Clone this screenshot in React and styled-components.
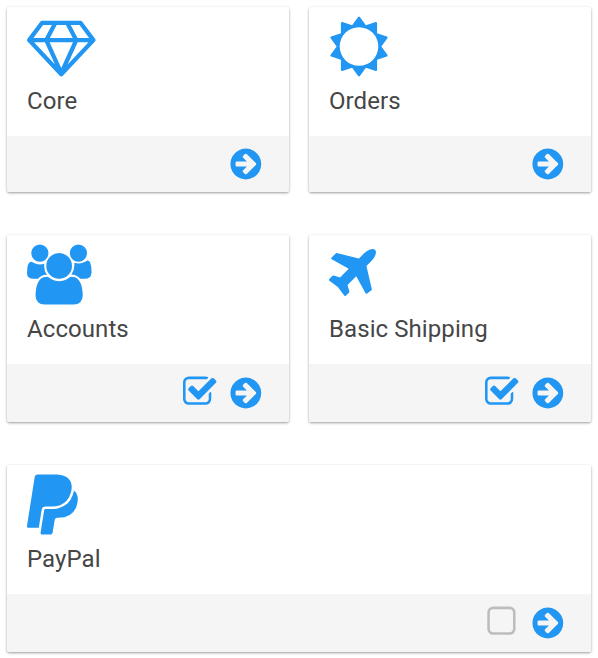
import React from 'react';
import styled, { createGlobalStyle } from 'styled-components';

const GlobalStyle = createGlobalStyle`
  body {
    margin: 0;
    background: #fff;
    font-family: Roboto, "Liberation Sans", sans-serif;
    color: #464646;
  }
`;

const Board = styled.main`
  display: grid;
  grid-template-columns: 282px 282px;
  column-gap: 20px;
  row-gap: 43px;
  padding: 7px;
  box-sizing: border-box;
  width: 598px;
`;

const Card = styled.section`
  grid-column: ${({ $wide }) => ($wide ? 'span 2' : 'auto')};
  display: flex;
  flex-direction: column;
  background: #fff;
  border-radius: 2px;
  overflow: hidden;
  box-shadow: 0 1px 3px rgba(0, 0, 0, 0.26), 0 1px 2px rgba(0, 0, 0, 0.16);
`;

const Body = styled.div`
  box-sizing: border-box;
  height: 129px;
  padding: 9px 20px 0;
`;

const Title = styled.h2`
  margin: 8px 0 0;
  font-size: 24px;
  line-height: 34px;
  font-weight: 400;
  letter-spacing: 0.08px;
  white-space: nowrap;
`;

const Footer = styled.footer`
  display: flex;
  justify-content: flex-end;
  align-items: flex-start;
  box-sizing: border-box;
  height: ${({ $tall }) => ($tall ? 58 : 56)}px;
  padding: ${({ $tall }) => ($tall ? 11 : 10)}px 28px 0 0;
  background: #f5f5f5;
`;

const Action = styled.button`
  display: flex;
  margin: 0;
  padding: 0;
  border: 0;
  background: none;
  color: #2196f3;
`;

const Toggle = styled(Action)`
  margin: -1px ${({ $on }) => ($on ? 14 : 16.5)}px 0 0;
  color: ${({ $on }) => ($on ? '#2196f3' : '#bdbdbd')};
`;

const Glyph = styled.svg`
  display: block;
  overflow: visible;
  height: ${({ $size }) => $size}px;
  width: ${({ $size, $units }) => ($size * $units) / 1792}px;
  fill: ${({ $tint }) => $tint || 'currentColor'};
`;

const icons = {
  diamond: {
    x: 0,
    y: -15,
    w: 2048,
    d: 'M212 768l623 665-300-665h-323zm812 772l349-772h-698l349 772zm-486-900l204-384h-262l-288 384h346zm675 793l623-665h-323l-300 665zm-531-793h684l-204-384h-276l-204 384zm828 0h346l-288-384h-262l204 384zM1651 154l384 512q14 18 13 41.5t-17 40.5l-960 1024q-18 20-47 20t-47-20l-960-1024q-16-17-17-40.5t13-41.5l384-512q18-26 51-26h1152q33 0 51 26z',
  },
  sun: {
    x: 0,
    y: -15,
    w: 1792,
    d: 'M1472 896q0-117-45.5-223.5t-123-184-184-123-223.5-45.5-223.5 45.5-184 123-123 184-45.5 223.5 45.5 223.5 123 184 184 123 223.5 45.5 223.5-45.5 184-123 123-184 45.5-223.5zm276 277q-4 15-20 20l-292 96v306q0 16-13 26-15 10-29 4l-292-94-180 248q-10 13-26 13t-26-13l-180-248-292 94q-14 6-29-4-13-10-13-26v-306l-292-96q-16-5-20-20-5-17 4-29l180-248-180-248q-9-13-4-29 4-15 20-20l292-96v-306q0-16 13-26 15-10 29-4l292 94 180-248q9-12 26-12t26 12l180 248 292-94q14-6 29 4 13 10 13 26v306l292 96q16 5 20 20 5 16-4 29l-180 248 180 248q9 12 4 29z',
  },
  users: {
    x: 64,
    y: -15,
    w: 1920,
    d: 'M657 896q-162 5-265 128h-134q-82 0-138-40.5t-56-118.5q0-353 124-353 6 0 43.5 21t97.5 42.5 119 21.5q67 0 133-23-5 37-5 66 0 159 90 287zm1071 637q0 120-73 189.5t-194 69.5h-874q-121 0-194-69.5t-73-189.5q0-53 3.5-103.5t14-109 26.5-108.5 43-97.5 62-81 85.5-53.5 111.5-20q10 0 43 21.5t73 48 107 48 135 21.5 135-21.5 107-48 73-48 43-21.5q61 0 111.5 20t85.5 53.5 62 81 43 97.5 26.5 108.5 14 109 3.5 103.5zm-1024-1277q0 106-75 181t-181 75-181-75-75-181 75-181 181-75 181 75 75 181zm704 384q0 159-112.5 271.5t-271.5 112.5-271.5-112.5-112.5-271.5 112.5-271.5 271.5-112.5 271.5 112.5 112.5 271.5zm576 225q0 78-56 118.5t-138 40.5h-134q-103-123-265-128 90-128 90-287 0-29-5-66 66 23 133 23 59 0 119-21.5t97.5-42.5 43.5-21q124 0 124 353zm-128-609q0 106-75 181t-181 75-181-75-75-181 75-181 181-75 181 75 75 181z',
  },
  plane: {
    x: 192,
    y: -15,
    w: 1408,
    d: 'M1568 160q44 52 12 148t-108 172l-161 161 160 696q5 19-12 33l-128 96q-7 6-19 6-4 0-7-1-15-3-21-16l-279-508-259 259 53 194q5 17-8 31l-96 96q-9 9-23 9h-2q-15-2-24-13l-189-252-252-189q-11-7-13-23-1-13 9-25l96-97q9-9 23-9 6 0 8 1l194 53 259-259-508-279q-14-8-17-24-2-16 9-27l128-128q14-13 30-8l665 159 160-160q76-76 172-108t148 12z',
  },
  paypal: {
    x: 138,
    y: -15,
    w: 1520,
    d: 'M1647 646q18 84-4 204-87 444-565 444h-44q-25 0-44 16.5t-24 42.5l-4 19-55 346-2 15q-5 26-24.5 42.5t-44.5 16.5h-251q-21 0-33-15t-9-36q9-56 26.5-168t26.5-168 27-167.5 27-167.5q5-37 43-37h131q133 2 236-21 175-39 287-144 102-95 155-246 24-70 35-133 1-6 2.5-7.5t3.5-1 6 3.5q79 59 98 162zm-172-282q0 107-46 236-80 233-302 315-113 40-252 42 0 1-90 1l-90-1q-100 0-118 96-2 8-85 530-1 10-12 10h-295q-22 0-36.5-16.5t-11.5-38.5l232-1471q5-29 27.5-48t51.5-19h598q34 0 97.5 13t111.5 32q107 41 163.5 123t56.5 196z',
  },
  checked: {
    x: 64,
    y: 0,
    w: 1664,
    d: 'M1472 930v318q0 119-84.5 203.5t-203.5 84.5h-832q-119 0-203.5-84.5t-84.5-203.5v-832q0-119 84.5-203.5t203.5-84.5h832q63 0 117 25 15 7 18 23 3 17-9 29l-49 49q-10 10-23 10-3 0-9-2-23-6-45-6h-832q-66 0-113 47t-47 113v832q0 66 47 113t113 47h832q66 0 113-47t47-113v-254q0-13 9-22l64-64q10-10 23-10 6 0 12 3 20 8 20 29zm231-489l-814 814q-24 24-57 24t-57-24l-430-430q-24-24-24-57t24-57l110-110q24-24 57-24t57 24l263 263 647-647q24-24 57-24t57 24l110 110q24 24 24 57t-24 57z',
  },
  unchecked: {
    x: 178,
    y: 0,
    w: 1408,
    d: 'M1312 256h-832q-66 0-113 47t-47 113v832q0 66 47 113t113 47h832q66 0 113-47t47-113v-832q0-66-47-113t-113-47zm288 160v832q0 119-84.5 203.5t-203.5 84.5h-832q-119 0-203.5-84.5t-84.5-203.5v-832q0-119 84.5-203.5t203.5-84.5h832q119 0 203.5 84.5t84.5 203.5z',
  },
  arrow: {
    x: 108,
    y: 0,
    w: 1536,
    d: 'M1413 896q0-27-18-45l-91-91-362-362q-18-18-45-18t-45 18l-91 91q-18 18-18 45t18 45l189 189h-502q-26 0-45 19t-19 45v128q0 26 19 45t45 19h502l-189 189q-19 19-19 45t19 45l91 91q18 18 45 18t45-18l362-362 91-91q18-18 18-45zm251 0q0 209-103 385.5t-279.5 279.5-385.5 103-385.5-103-279.5-279.5-103-385.5 103-385.5 279.5-279.5 385.5-103 385.5 103 279.5 279.5 103 385.5z',
  },
};

function Icon({ name, size, tint }) {
  const { x, y, w, d } = icons[name];
  return (
    <Glyph viewBox={`${x} ${y} ${w} 1792`} $size={size} $units={w} $tint={tint} aria-hidden="true">
      <path d={d} />
    </Glyph>
  );
}

const modules = [
  { title: 'Core', icon: 'diamond' },
  { title: 'Orders', icon: 'sun' },
  { title: 'Accounts', icon: 'users', enabled: true },
  { title: 'Basic Shipping', icon: 'plane', enabled: true },
  { title: 'PayPal', icon: 'paypal', enabled: false, wide: true },
];

function ModuleCard({ title, icon, enabled, wide }) {
  const optional = enabled !== undefined;
  return (
    <Card $wide={wide}>
      <Body>
        <Icon name={icon} size={60} tint="#2196f3" />
        <Title>{title}</Title>
      </Body>
      <Footer $tall={optional}>
        {optional && (
          <Toggle $on={enabled} aria-pressed={enabled} aria-label={`Enable ${title}`}>
            <Icon name={enabled ? 'checked' : 'unchecked'} size={36} />
          </Toggle>
        )}
        <Action aria-label={`Open ${title}`}>
          <Icon name="arrow" size={36} />
        </Action>
      </Footer>
    </Card>
  );
}

export default function App() {
  return (
    <>
      <GlobalStyle />
      <Board>
        {modules.map((m) => (
          <ModuleCard key={m.title} {...m} />
        ))}
      </Board>
    </>
  );
}
